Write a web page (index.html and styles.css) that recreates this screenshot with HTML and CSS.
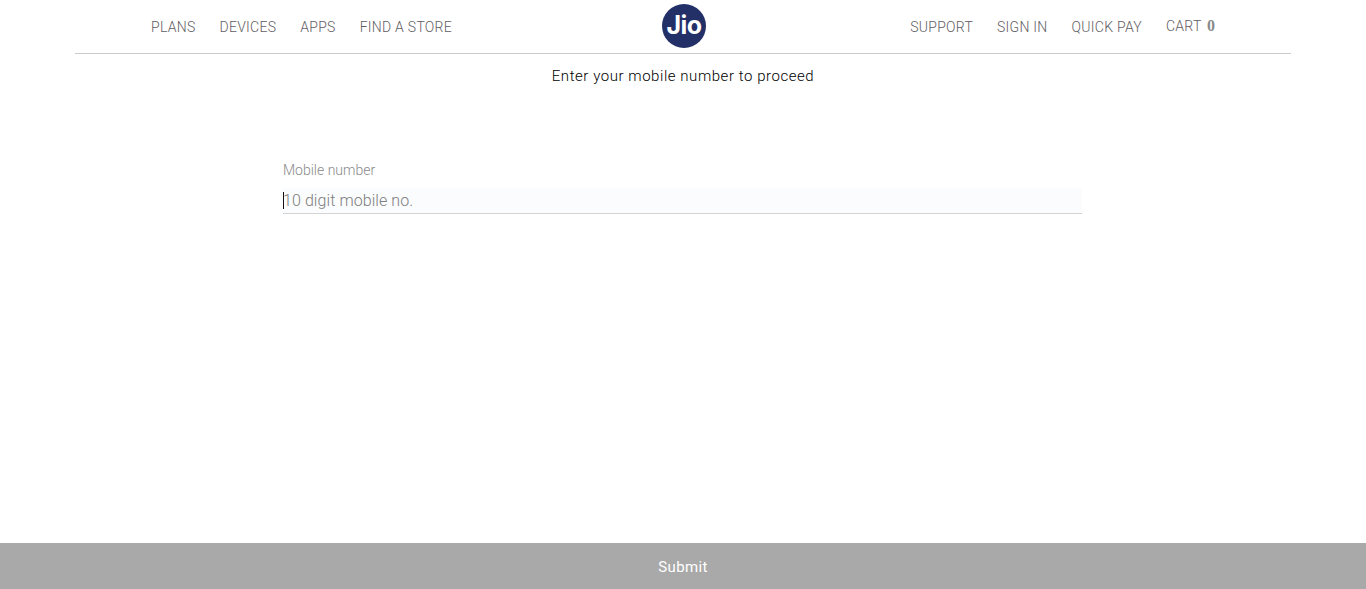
FILE: index.html
```html
<!DOCTYPE html>
<html lang="en">
<head>
<meta charset="utf-8">
<title>Jio</title>
<link rel="stylesheet" href="styles.css">
</head>
<body>
<div class="page">
  <header class="header">
    <nav class="nav">
      <a class="nav-link">PLANS</a>
      <a class="nav-link">DEVICES</a>
      <a class="nav-link">APPS</a>
      <a class="nav-link">FIND A STORE</a>
    </nav>
    <svg class="logo" viewBox="0 0 44 44" role="img" aria-label="Jio">
      <circle cx="22" cy="22" r="22" fill="#233068"/>
      <text class="logo-text" x="22" y="30" text-anchor="middle">Jio</text>
    </svg>
    <nav class="nav nav-right">
      <a class="nav-link">SUPPORT</a>
      <a class="nav-link">SIGN IN</a>
      <a class="nav-link">QUICK PAY</a>
      <a class="nav-link cart">CART <b class="cart-count">0</b></a>
    </nav>
  </header>
  <main class="main">
    <p class="intro">Enter your mobile number to proceed</p>
    <form class="form">
      <label class="label" for="mobile">Mobile number</label>
      <div class="field">
        <span class="caret"></span>
        <input class="input" id="mobile" type="text" placeholder="10 digit mobile no.">
      </div>
    </form>
  </main>
  <footer class="submit">Submit</footer>
</div>
</body>
</html>
```
FILE: styles.css
```css
* { box-sizing: border-box; }
html, body { margin: 0; height: 100%; }
body { font-family: Roboto, "Liberation Sans", Arial, sans-serif; font-weight: 300; background: #fff; overflow: hidden; }
.page { height: 589px; display: flex; flex-direction: column; }
.header {
  height: 54px;
  margin: 0 75px;
  padding: 0 76px;
  border-bottom: 1px solid #ccc;
  display: grid;
  grid-template-columns: 1fr 44px 1fr;
  align-items: start;
}
.nav { display: flex; gap: 24px; padding-top: 19px; }
.nav-right { justify-content: flex-end; }
.nav-link { font-size: 14px; line-height: 16px; color: #5f5d62; white-space: nowrap; letter-spacing: 0.27px; }
.logo { width: 44px; height: 44px; margin: 4px 0 0 1px; display: block; }
.logo-text { font-family: Inter, "Liberation Sans", sans-serif; font-weight: 700; font-size: 25px; fill: #fff; letter-spacing: -0.5px; }
.cart { position: relative; top: -1px; }
.cart-count { font-family: "Liberation Serif", serif; font-weight: 700; font-size: 16px; margin-left: 2px; color: #8a8a8a; letter-spacing: 0; }
.main { flex: 1; }
.intro { margin: 13px 0 0; text-align: center; font-size: 15px; line-height: 18px; color: #000; font-weight: 300; letter-spacing: 0.55px; }
.form { width: 799px; margin: 77px 0 0 283px; }
.label { display: block; font-size: 14px; line-height: 16px; color: #8a8a8a; }
.field { margin-top: 10px; height: 26px; display: flex; align-items: center; background: #fbfcfe; border-bottom: 1px solid #d4d4d4; position: relative; }
.caret { position: absolute; left: 0; top: 4px; width: 1px; height: 17px; background: #111; }
.input { flex: 1; height: 100%; border: 0; outline: 0; padding: 0; background: transparent; font: 300 16px Roboto, "Liberation Sans", sans-serif; letter-spacing: 0.08px; color: #333; }
.input::placeholder { color: #7d7d7d; opacity: 1; }
.submit { height: 46px; padding-top: 1px; background: #a9a9a9; color: #fff; display: flex; align-items: center; justify-content: center; font-size: 15px; font-weight: 400; letter-spacing: 0.35px; }
```
